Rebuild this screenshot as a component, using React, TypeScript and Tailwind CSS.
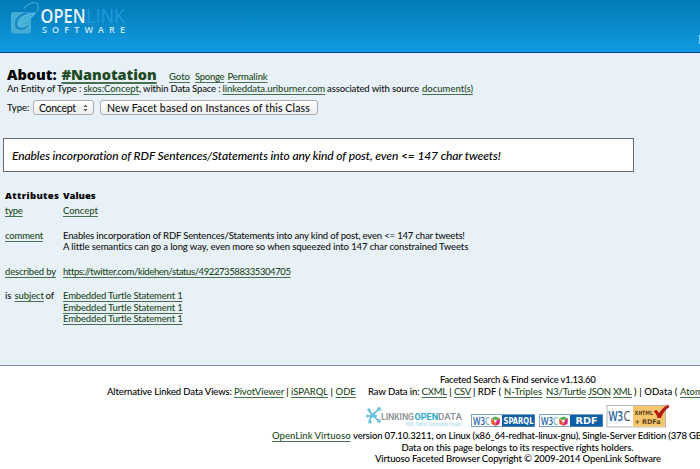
import type { ReactNode } from "react";

type RunProps = { className?: string; children: ReactNode };

function Run({ className = "", children }: RunProps) {
  return <span className={`inline-block shrink-0 whitespace-pre ${className}`}>{children}</span>;
}

function Link({ className = "", children }: RunProps) {
  return (
    <a
      href="#"
      className={`inline-block shrink-0 whitespace-pre text-[#1d4a22] underline decoration-[#477052] decoration-1 underline-offset-[1.5px] ${className}`}
    >
      {children}
    </a>
  );
}

function OpenLinkLogo() {
  return (
    <svg width="130" height="40" viewBox="0 0 130 40" aria-label="OpenLink Software">
      <rect x="11" y="12" width="20" height="21.5" rx="3" fill="#45acd4" />
      <path d="M29 13.500C21 13 15.500 19 16 24.500C16.500 29.500 22.500 30.500 27.500 25.500" fill="none" stroke="#148ac4" strokeWidth="2.200" />
      <path d="M18.500 24C22 22.500 30 19.500 34.500 13.500C30 13 24 15.500 21 20C17.500 26 21.500 28.500 27 24.500" fill="none" stroke="#4fb6db" strokeWidth="2" />
      <path d="M23.500 8.500C28 3 35 .8 37.500 4C39 7 38 10 36.500 12" fill="none" stroke="#349fcf" strokeWidth="1.500" />
      <g fontFamily="'Open Sans', sans-serif">
        <text x="40.500" y="23" fontSize="19.500" fill="#e8f6fd" fontWeight="600" textLength="45" lengthAdjust="spacingAndGlyphs">OPEN</text>
        <text x="86" y="23" fontSize="19.500" fill="#209bdc" textLength="39" lengthAdjust="spacingAndGlyphs">LINK</text>
        <text x="42" y="32.500" fontSize="9" fill="#c9e8f7" fontWeight="600" textLength="83">SOFTWARE</text>
      </g>
    </svg>
  );
}

function LinkingOpenData() {
  return (
    <svg width="98" height="22" viewBox="365 406 98 22" aria-label="Linking Open Data">
      <g stroke="#4db6d6" strokeWidth="1.500" fill="none">
        <path d="M369 410L372 415L378 420M378 410L372 415L369 422M366.500 416H377" />
      </g>
      <g fill="#6bc4de">
        <circle cx="369" cy="410" r="1.700" />
        <circle cx="379" cy="409" r="2" />
        <circle cx="367.500" cy="416" r="1.500" />
        <circle cx="370" cy="422" r="1.800" />
        <circle cx="379" cy="421" r="1.900" />
        <circle cx="373.500" cy="415.500" r="2.200" />
      </g>
      <g fontFamily="Roboto, sans-serif">
        <text x="381" y="420" fontSize="8.800" fill="#888e91" textLength="33">LINKING</text>
        <text x="414.500" y="420" fontSize="8.800" fontWeight="700" fill="#2ca6cf" textLength="23.500" lengthAdjust="spacingAndGlyphs">OPEN</text>
        <text x="438" y="420" fontSize="8.800" fill="#888e91" textLength="24" lengthAdjust="spacingAndGlyphs">DATA</text>
        <text x="406" y="426" fontSize="5" fill="#a9dcea" textLength="56" lengthAdjust="spacingAndGlyphs">W3C SWEO Community Project</text>
      </g>
    </svg>
  );
}

function SemanticBadge({ label, labelX, labelWidth }: { label: string; labelX: number; labelWidth: number }) {
  return (
    <svg width="64" height="13" viewBox="0 0 64 13" aria-label={`W3C ${label}`}>
      <rect x=".5" y=".5" width="63" height="12" fill="#fff" stroke="#7ba5c6" />
      <rect x="31" y="1" width="32.500" height="11.500" fill="#0e5fa5" />
      <g fontFamily="'Open Sans', sans-serif" fontWeight="600">
        <text x="2" y="10.500" fontSize="11" fill="#1761a5" textLength="12" lengthAdjust="spacingAndGlyphs">W3</text>
        <text x="14" y="10.500" fontSize="11" fill="#8bacc5" textLength="5" lengthAdjust="spacingAndGlyphs">C</text>
      </g>
      <path d="M20 5L24.500 6.500V12L20.500 10Z" fill="#ec5a2c" />
      <path d="M29 4.500L24.500 6.500V12L28.500 10Z" fill="#d5277a" />
      <path d="M20 4.500L24.500 2.500L29 4.500L24.500 6.500Z" fill="#56ab4c" />
      <path d="M23 6L25.500 5.500V8L23.500 8.500Z" fill="#fff" />
      <text x={labelX} y="10" fontFamily="'DejaVu Sans', sans-serif" fontWeight="700" fontSize="8.500" fill="#fff" textLength={labelWidth} lengthAdjust="spacingAndGlyphs">{label}</text>
    </svg>
  );
}

function XhtmlBadge() {
  return (
    <svg width="64" height="24" viewBox="606 404 64 24" aria-label="W3C XHTML + RDFa">
      <rect x="607" y="405.500" width="58.500" height="21.500" fill="#fff" stroke="#b5b5b5" />
      <rect x="633" y="406" width="32" height="20.500" fill="#f8c66d" />
      <g fontFamily="'Open Sans', sans-serif">
        <text x="608.500" y="421" fontSize="14.500" fontWeight="600" fill="#1b619c" textLength="14.500" lengthAdjust="spacingAndGlyphs">W3</text>
        <text x="623.500" y="421" fontSize="14.500" fill="#47525c" textLength="7" lengthAdjust="spacingAndGlyphs">C</text>
      </g>
      <g fontFamily="'DejaVu Sans', sans-serif" fontWeight="700" fill="#584522">
        <text x="634.500" y="415" fontSize="6" textLength="18.500" lengthAdjust="spacingAndGlyphs">XHTML</text>
        <text x="634.500" y="423.500" fontSize="6.500" textLength="26" lengthAdjust="spacingAndGlyphs">+ RDFa</text>
      </g>
      <path d="M653.500 411L656.500 410L659 413C662 409 665 406 668 404.500L669.500 407C665 410 662.500 413.500 661 418H657.500C657 415 655.500 413 653.500 411Z" fill="#b51c18" />
    </svg>
  );
}

export default function App() {
  return (
    <div className="flex h-[469px] w-[700px] flex-col overflow-hidden bg-white font-['Lato',sans-serif] text-[9.5px] leading-[12px] font-medium text-[#111]">
      <header className="flex h-[53px] shrink-0 items-start justify-between border-b border-[#053e8c] bg-gradient-to-b from-[#027ab5] to-[#119be3]">
        <OpenLinkLogo />
        <span className="mt-[35px] h-[9px] w-px bg-[#8dcaeb]" />
      </header>

      <main className="h-[313px] shrink-0 border-b border-[#85839a] bg-[#e8f1f8]">
        <div className="flex h-[30px] items-baseline pt-[12px] pl-[7px] whitespace-pre">
          <h1 className="flex w-[162px] font-['Open_Sans'] text-[14.5px] leading-[20px] font-extrabold text-black">
            <Run className="w-[54.5px]">About:</Run>
            <Link className="decoration-[1.5px] tracking-[-0.05px]">#Nanotation</Link>
          </h1>
          <Link className="mr-[4.5px] w-[21.5px]">Goto</Link>
          <Link className="mr-1 w-[28.5px] tracking-[-0.3px]">Sponge</Link>
          <Link className="tracking-[-0.15px]">Permalink</Link>
        </div>
        <p className="flex h-[17px] pl-[7px]">
          <Run className="w-[76.500px] tracking-[-0.12px]">An Entity of Type : </Run>
          <Link className="w-[55.500px] tracking-[-0.03px]">skos:Concept</Link>
          <Run className="w-[83.500px] tracking-[-0.16px]">, within Data Space : </Run>
          <Link className="w-[104.500px] tracking-[-0.06px]">linkeddata.uriburner.com</Link>
          <Run className="w-[95px] tracking-[-0.115px]">associated with source </Run>
          <Link>document(s)</Link>
        </p>
        <div className="flex h-[15px] items-center pl-[7px]">
          <Run className="w-[26px]">Type:</Run>
          <button className="mr-[6px] flex h-[15px] w-[61px] items-center justify-between rounded-[3px] border border-[#a9adb0] bg-gradient-to-b from-white to-[#eeeeee] pr-[5px] pl-[5px] text-[10.5px] leading-[12px]">
            <Run className="tracking-[-0.3px]">Concept</Run>
            <svg width="5" height="8" viewBox="0 0 5 8" fill="#555">
              <path d="M2.500 .5L4.500 3H.5ZM2.500 7.500L.5 5H4.500Z" />
            </svg>
          </button>
          <button className="flex h-[15px] w-[218px] items-center rounded-[3px] border border-[#a9adb0] bg-gradient-to-b from-white to-[#eeeeee] pl-[6px] text-[10.5px] leading-[12px]">
            <Run className="tracking-[0.14px]">New Facet based on Instances of this Class</Run>
          </button>
        </div>

        <div className="mt-[23px] ml-[3px] flex h-[34px] w-[631px] items-center border border-[#68696b] bg-white pl-[8px] text-[12px] leading-[15px] text-black italic">
          <Run className="tracking-[-0.095px]">Enables incorporation of RDF Sentences/Statements into any kind of post, even &lt;= 147 char tweets!</Run>
        </div>

        <div className="grid grid-cols-[58px_1fr] pt-[18px] pl-[5px] leading-[11.5px]">
          <div className="h-[15px] font-['Open_Sans'] text-[9.5px] font-extrabold text-black"><Run className="tracking-[0.35px]">Attributes</Run></div>
          <div className="h-[15px] font-['Open_Sans'] text-[9.5px] font-extrabold text-black"><Run>Values</Run></div>
          <div className="h-[24.5px]"><Link className="tracking-[-0.3px]">type</Link></div>
          <div><Link className="tracking-[-0.05px]">Concept</Link></div>
          <div className="h-[36px]"><Link className="tracking-[-0.19px]">comment</Link></div>
          <div className="flex flex-col">
            <Run className="tracking-[-0.163px]">Enables incorporation of RDF Sentences/Statements into any kind of post, even &lt;= 147 char tweets!</Run>
            <Run className="tracking-[-0.113px]">A little semantics can go a long way, even more so when squeezed into 147 char constrained Tweets</Run>
          </div>
          <div className="h-[24.5px]"><Link className="tracking-[-0.175px]">described by</Link></div>
          <div><Link className="tracking-[-0.4px]">https://twitter.com/kidehen/status/492273588335304705</Link></div>
          <div className="flex"><Run className="w-[9.5px]">is</Run><Link className="w-[31px] tracking-[-0.1px]">subject</Link><Run>of</Run></div>
          <div className="flex flex-col items-start">
            <Link className="tracking-[-0.18px]">Embedded Turtle Statement 1</Link>
            <Link className="tracking-[-0.18px]">Embedded Turtle Statement 1</Link>
            <Link className="tracking-[-0.18px]">Embedded Turtle Statement 1</Link>
          </div>
        </div>
      </main>

      <footer className="flex flex-col pt-[8px] leading-[11.5px] whitespace-pre text-black">
        <div className="pl-[440px]"><Run className="tracking-[-0.22px]">Faceted Search &amp; Find service v1.13.60</Run></div>
        <div className="flex pl-[107px]">
          <Run className="w-[127px] tracking-[-0.115px]">Alternative Linked Data Views:</Run>
          <Link className="tracking-[-0.09px]">PivotViewer</Link>
          <Run className="w-[7px] text-center">|</Run>
          <Link className="tracking-[-0.09px]">iSPARQL</Link>
          <Run className="w-[7.500px] text-center">|</Run>
          <Link className="w-[32.500px]">ODE</Link>
          <Run className="w-[53.500px] tracking-[-0.1px]">Raw Data in:</Run>
          <Link className="tracking-[-0.2px]">CXML</Link>
          <Run className="w-[7px] text-center">|</Run>
          <Link className="w-[17px] tracking-[-0.3px]">CSV</Link>
          <Run className="w-[33px] pl-[2px]">| RDF (</Run>
          <Link className="w-[42px] tracking-[0.1px]">N-Triples</Link>
          <Link className="w-[42px] tracking-[-0.15px]">N3/Turtle</Link>
          <Link className="w-[25px] tracking-[-0.35px]">JSON</Link>
          <Link className="w-[21px] tracking-[-0.4px]">XML</Link>
          <Run className="w-[46px] tracking-[0.1px]">) | OData (</Run>
          <Link>Atom</Link>
        </div>
        <div className="flex h-[33px] pt-[7px] pl-[365px]">
          <div className="w-[106px] pt-[2px]"><LinkingOpenData /></div>
          <div className="w-[68px] pt-[10px]"><SemanticBadge label="SPARQL" labelX={32.5} labelWidth={30} /></div>
          <div className="w-[67px] pt-[10px]"><SemanticBadge label="RDF" labelX={36.5} labelWidth={22} /></div>
          <XhtmlBadge />
        </div>
        <div className="flex pl-[272px]">
          <Link className="w-[81px]">OpenLink Virtuoso</Link>
          <Run className="tracking-[-0.157px]">version 07.10.3211, on Linux (x86_64-redhat-linux-gnu), Single-Server Edition (378 GB</Run>
        </div>
        <div className="pl-[401.5px]"><Run className="tracking-[-0.11px]">Data on this page belongs to its respective rights holders.</Run></div>
        <div className="pl-[375px]"><Run className="tracking-[-0.145px]">Virtuoso Faceted Browser Copyright © 2009-2014 OpenLink Software</Run></div>
      </footer>
    </div>
  );
}
